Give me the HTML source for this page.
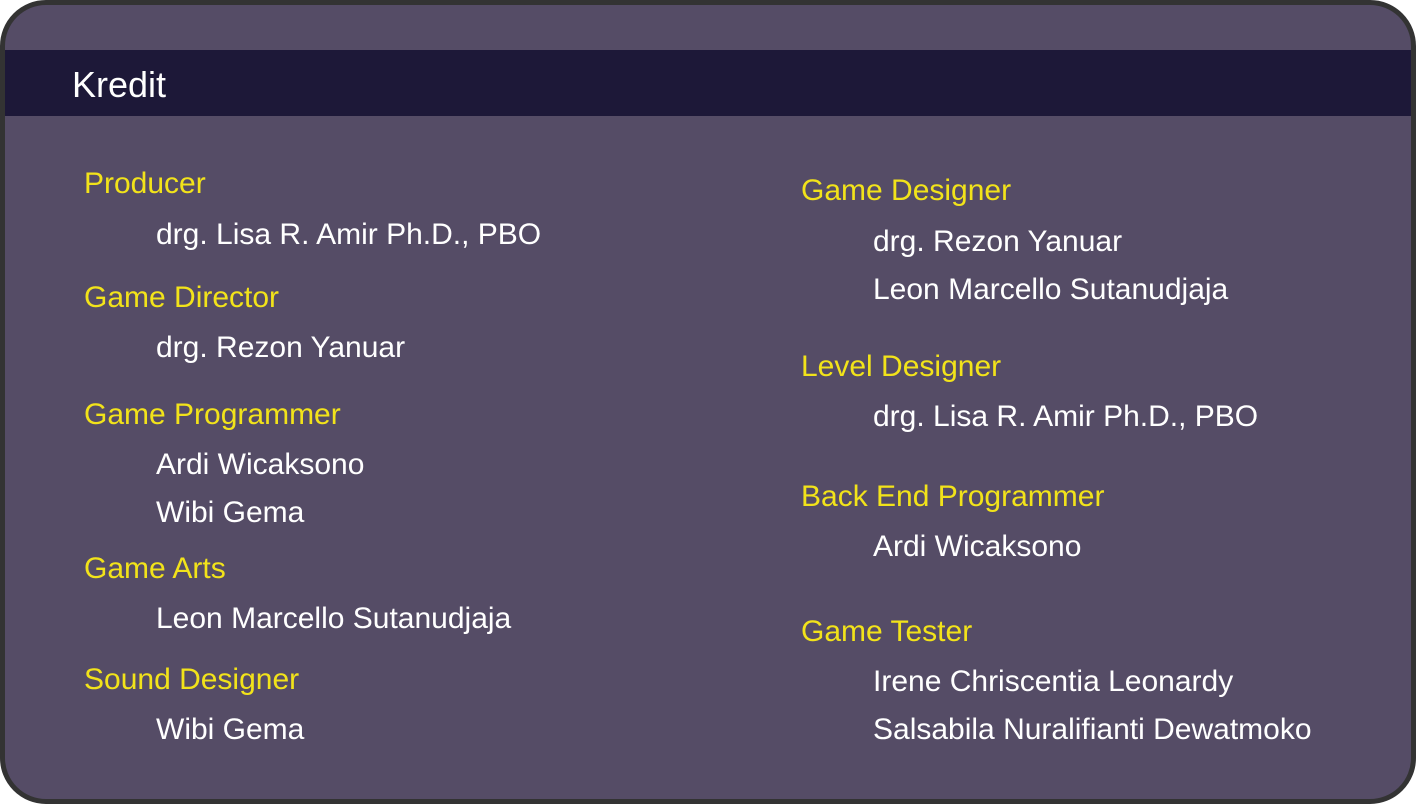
<!DOCTYPE html>
<html><head><style>
html,body{margin:0;padding:0;background:#fff;width:1416px;height:804px;overflow:hidden}
.card{position:absolute;left:0;top:0;width:1416px;height:804px;box-sizing:border-box;border:5px solid #333;border-radius:46px;background:#554c66;overflow:hidden}
.bar{position:absolute;left:0;right:0;top:45px;height:66px;background:#1d1838}
.t{position:absolute;font-family:"Liberation Sans",sans-serif;font-size:30px;line-height:40px;white-space:nowrap}
.h{color:#f2e31a}
.n{color:#fff}
</style></head><body>
<div class="card"><div class="bar"></div></div>
<div class="t n" style="left:72px;top:63px;font-size:36px;line-height:44px">Kredit</div>
<div class="t h" style="left:84px;top:164px">Producer</div>
<div class="t n" style="left:156px;top:215px">drg. Lisa R. Amir Ph.D., PBO</div>
<div class="t h" style="left:84px;top:278px">Game Director</div>
<div class="t n" style="left:156px;top:328px">drg. Rezon Yanuar</div>
<div class="t h" style="left:84px;top:395px">Game Programmer</div>
<div class="t n" style="left:156px;top:445px">Ardi Wicaksono</div>
<div class="t n" style="left:156px;top:493px">Wibi Gema</div>
<div class="t h" style="left:84px;top:549px">Game Arts</div>
<div class="t n" style="left:156px;top:599px">Leon Marcello Sutanudjaja</div>
<div class="t h" style="left:84px;top:660px">Sound Designer</div>
<div class="t n" style="left:156px;top:710px">Wibi Gema</div>

<div class="t h" style="left:801px;top:171px">Game Designer</div>
<div class="t n" style="left:873px;top:222px">drg. Rezon Yanuar</div>
<div class="t n" style="left:873px;top:270px">Leon Marcello Sutanudjaja</div>
<div class="t h" style="left:801px;top:347px">Level Designer</div>
<div class="t n" style="left:873px;top:397px">drg. Lisa R. Amir Ph.D., PBO</div>
<div class="t h" style="left:801px;top:477px">Back End Programmer</div>
<div class="t n" style="left:873px;top:527px">Ardi Wicaksono</div>
<div class="t h" style="left:801px;top:612px">Game Tester</div>
<div class="t n" style="left:873px;top:662px">Irene Chriscentia Leonardy</div>
<div class="t n" style="left:873px;top:710px">Salsabila Nuralifianti Dewatmoko</div>
</body></html>
